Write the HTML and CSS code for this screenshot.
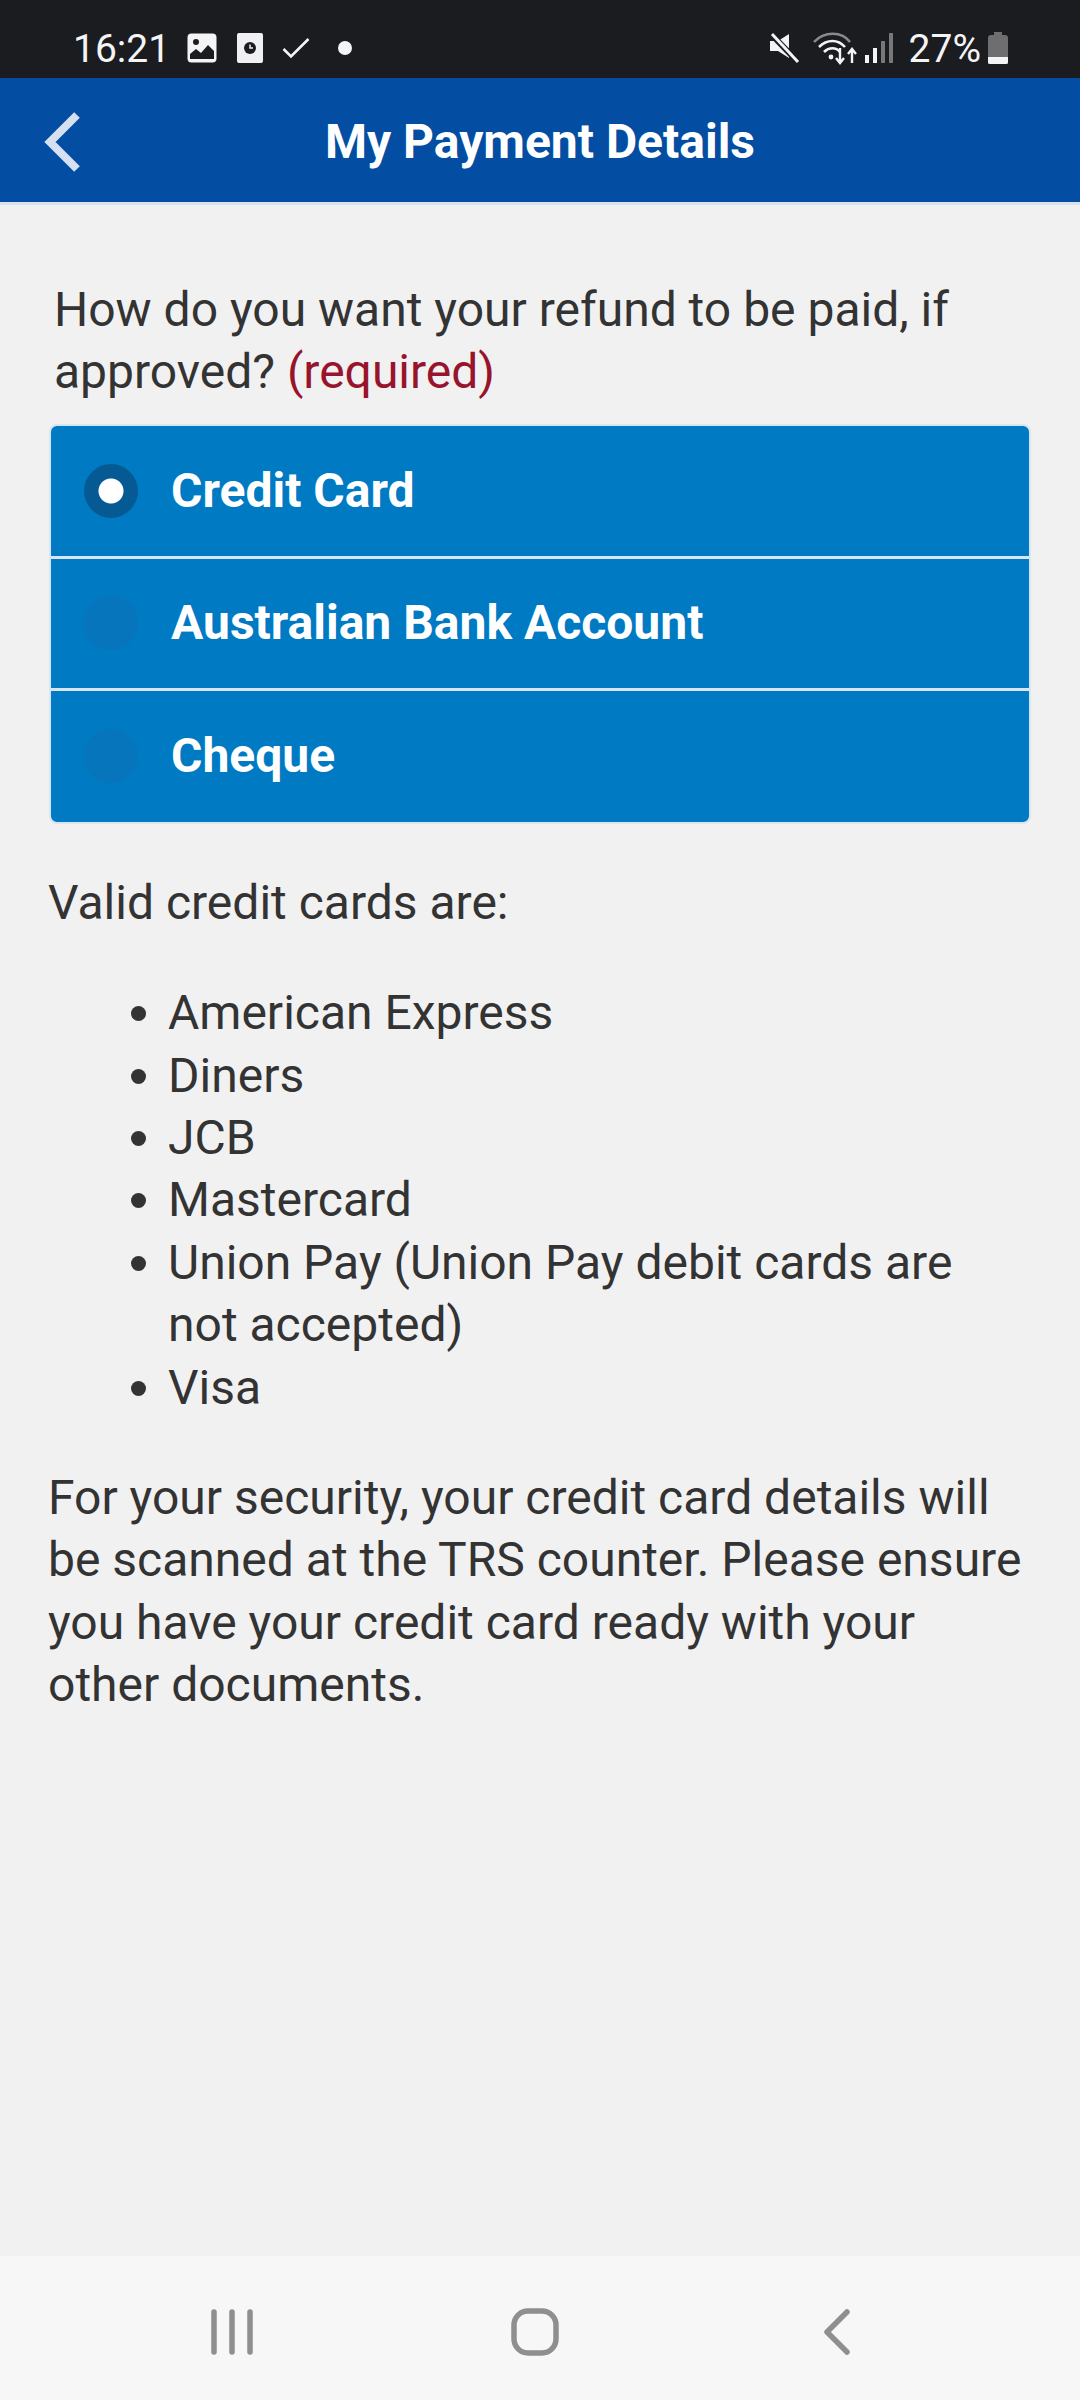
FILE: index.html
```html
<!DOCTYPE html>
<html lang="en">
<head>
    <meta charset="UTF-8">
    <meta name="viewport" content="width=device-width, initial-scale=1.0">
    <title>My Payment Details</title>
    <link rel="stylesheet" href="styles.css">
</head>
<body>
    <div id="app">
        <div class="status-bar">
            <span class="status-time">16:21</span>
            <svg class="status-icon icon-gallery" viewBox="0 0 30 30">
                <rect x="0.5" y="0.5" width="29" height="29" rx="4" fill="#f4f4f6"/>
                <circle cx="9" cy="9" r="3" fill="#1b1c20"/>
                <path d="M3 26v-5l6-5 5 4 7-8 6 6v8z" fill="#1b1c20"/>
            </svg>
            <svg class="status-icon icon-clock" viewBox="0 0 26 30">
                <rect x="0" y="0" width="26" height="30" rx="2" fill="#f0f0f4"/>
                <circle cx="13" cy="15" r="6" fill="#1b1c20"/>
                <path d="M13 11.5v3.5h3" fill="none" stroke="#f0f0f4" stroke-width="1.5"/>
            </svg>
            <svg class="status-icon icon-check" viewBox="0 0 28 22">
                <path d="M1.5 12l7.5 7.5L26.5 2" fill="none" stroke="#f4f4f6" stroke-width="2.6"/>
            </svg>
            <span class="status-dot"></span>
            <span class="status-spacer"></span>
            <svg class="status-icon icon-mute" viewBox="0 0 32 32">
                <path d="M21 2v24L10 19H2V9h8z" fill="#f4f4f6"/>
                <path d="M3 2l27 28" stroke="#1b1c20" stroke-width="6"/>
                <path d="M4 2l26 28" stroke="#f4f4f6" stroke-width="3"/>
            </svg>
            <svg class="status-icon icon-wifi" viewBox="0 0 46 34">
                <path d="M2 11C12 0 30 0 38 11" fill="none" stroke="#8a8a8c" stroke-width="2.6"/>
                <path d="M7 16c8-8 19-8 26 0" fill="none" stroke="#f4f4f6" stroke-width="2.6"/>
                <path d="M12 21c5-5 12-5 16 0" fill="none" stroke="#f4f4f6" stroke-width="2.6"/>
                <circle cx="19" cy="26" r="2.4" fill="#f4f4f6"/>
                <path d="M28 17v14M24 27l4 5 4-5" fill="none" stroke="#f4f4f6" stroke-width="2.4"/>
                <path d="M40 32V19M36 23l4-5 4 5" fill="none" stroke="#f4f4f6" stroke-width="2.4"/>
            </svg>
            <svg class="status-icon icon-signal" viewBox="0 0 28 30">
                <rect x="0" y="22" width="4" height="8" fill="#f4f4f6"/>
                <rect x="8" y="15" width="4" height="15" fill="#f4f4f6"/>
                <rect x="16" y="8" width="4" height="22" fill="#77777a"/>
                <rect x="24" y="0" width="4" height="30" fill="#77777a"/>
            </svg>
            <span class="status-battery-text">27%</span>
            <svg class="status-icon icon-battery" viewBox="0 0 20 32">
                <path d="M6 0h8v3h3a3 3 0 0 1 3 3v26H0V6a3 3 0 0 1 3-3h3z" fill="#6e6e70"/>
                <path d="M0 25h20v5a2 2 0 0 1-2 2H2a2 2 0 0 1-2-2z" fill="#f4f4f6"/>
            </svg>
        </div>

        <header class="app-header">
            <svg class="back-icon" viewBox="0 0 38 62">
                <path d="M33 4L6 31l27 27" fill="none" stroke="#d5e0f0" stroke-width="8"/>
            </svg>
            <h1>My Payment Details</h1>
        </header>

        <main class="content">
            <p class="question">How do you want your refund to be paid, if approved? <span class="required">(required)</span></p>

            <div class="options">
                <div class="option">
                    <span class="radio selected"></span>
                    <span>Credit Card</span>
                </div>
                <div class="option">
                    <span class="radio"></span>
                    <span>Australian Bank Account</span>
                </div>
                <div class="option">
                    <span class="radio"></span>
                    <span>Cheque</span>
                </div>
            </div>

            <p class="intro">Valid credit cards are:</p>
            <ul class="card-list">
                <li>American Express</li>
                <li>Diners</li>
                <li>JCB</li>
                <li>Mastercard</li>
                <li>Union Pay (Union Pay debit cards are not accepted)</li>
                <li>Visa</li>
            </ul>
            <p class="note">For your security, your credit card details will be scanned at the TRS counter. Please ensure you have your credit card ready with your other documents.</p>
        </main>

        <nav class="nav-bar">
            <span class="nav-slot">
                <svg class="nav-recent" viewBox="0 0 44 46">
                    <path d="M3 3v40M21 3v40M39 3v40" fill="none" stroke="#8f8f8f" stroke-width="5.5" stroke-linecap="round"/>
                </svg>
            </span>
            <span class="nav-slot">
                <svg class="nav-home" viewBox="0 0 48 48">
                    <rect x="3" y="3" width="42" height="42" rx="14" fill="none" stroke="#8f8f8f" stroke-width="5.5"/>
                </svg>
            </span>
            <span class="nav-slot">
                <svg class="nav-back" viewBox="0 0 28 46">
                    <path d="M24 3L4 23l20 20" fill="none" stroke="#8f8f8f" stroke-width="5.5" stroke-linecap="round" stroke-linejoin="round"/>
                </svg>
            </span>
        </nav>
    </div>
</body>
</html>
```

FILE: styles.css
```css
* {
    box-sizing: border-box;
}

body {
    margin: 0;
    font-family: Roboto, "Liberation Sans", sans-serif;
    background-color: #f1f1f2;
    color: #333;
}

#app {
    display: flex;
    flex-direction: column;
    width: 1080px;
    height: 2400px;
}

.status-bar {
    display: flex;
    align-items: center;
    height: 78px;
    padding: 18px 72px 0 73px;
    background-color: #1b1c20;
    color: #f4f4f6;
    font-size: 39px;
}

.status-time {
    margin-right: 17px;
    padding-top: 2px;
}

.status-icon {
    display: block;
    flex: none;
}

.icon-gallery {
    width: 30px;
    height: 30px;
    margin-right: 20px;
}

.icon-clock {
    width: 26px;
    height: 30px;
    margin-right: 19px;
}

.icon-check {
    width: 28px;
    height: 22px;
    margin-right: 28px;
}

.status-dot {
    width: 14px;
    height: 14px;
    border-radius: 50%;
    background-color: #f4f4f6;
}

.status-spacer {
    flex: 1;
}

.icon-mute {
    width: 32px;
    height: 32px;
    margin-right: 12px;
}

.icon-wifi {
    width: 46px;
    height: 34px;
    margin-right: 7px;
}

.icon-signal {
    width: 28px;
    height: 30px;
    margin-right: 16px;
}

.status-battery-text {
    margin-right: 7px;
    padding-top: 2px;
}

.icon-battery {
    width: 20px;
    height: 32px;
}

.app-header {
    display: flex;
    align-items: center;
    position: relative;
    height: 127px;
    padding-top: 3px;
    background-color: #034ea2;
    border-bottom: 3px solid #d9e4f0;
}

.back-icon {
    position: absolute;
    left: 44px;
    top: 33px;
    width: 38px;
    height: 62px;
}

.app-header h1 {
    flex: 1;
    margin: 0;
    text-align: center;
    color: #fff;
    font-size: 48px;
    font-weight: 700;
}

.content {
    flex: 1;
    padding: 0 48px;
    font-size: 48px;
    line-height: 62.4px;
}

.question {
    margin: 74px 0 0;
    padding-left: 6px;
}

.required {
    color: #98142d;
}

.options {
    margin: 20px 1px 0;
    border: 2px solid #d8e6f2;
    border-radius: 8px;
    background-color: #007ac3;
    overflow: hidden;
}

.option {
    display: flex;
    align-items: center;
    height: 130px;
    padding-left: 33px;
    color: #fff;
    font-size: 48px;
    font-weight: 700;
}

.option + .option {
    border-top: 3px solid #d8e6f2;
    height: 132px;
}

.option:last-child {
    height: 134px;
}

.radio {
    width: 54px;
    height: 54px;
    margin-right: 33px;
    border-radius: 50%;
    background-color: #0675bc;
}

.radio.selected {
    background-color: #055a94;
    background-image: radial-gradient(circle, #fff 12px, transparent 13px);
}

.intro {
    margin: 48px 0 0;
}

.card-list {
    margin: 48px 0 0;
    padding: 0 0 0 120px;
}

.note {
    margin: 48px 0 0;
}

.nav-bar {
    display: flex;
    align-items: center;
    height: 144px;
    padding: 8px 0 0 82px;
    background-color: #f7f7f7;
}

.nav-slot {
    display: flex;
    justify-content: center;
    width: 302px;
}

.nav-recent {
    width: 44px;
    height: 46px;
}

.nav-home {
    width: 48px;
    height: 48px;
}

.nav-back {
    width: 28px;
    height: 46px;
}
```
